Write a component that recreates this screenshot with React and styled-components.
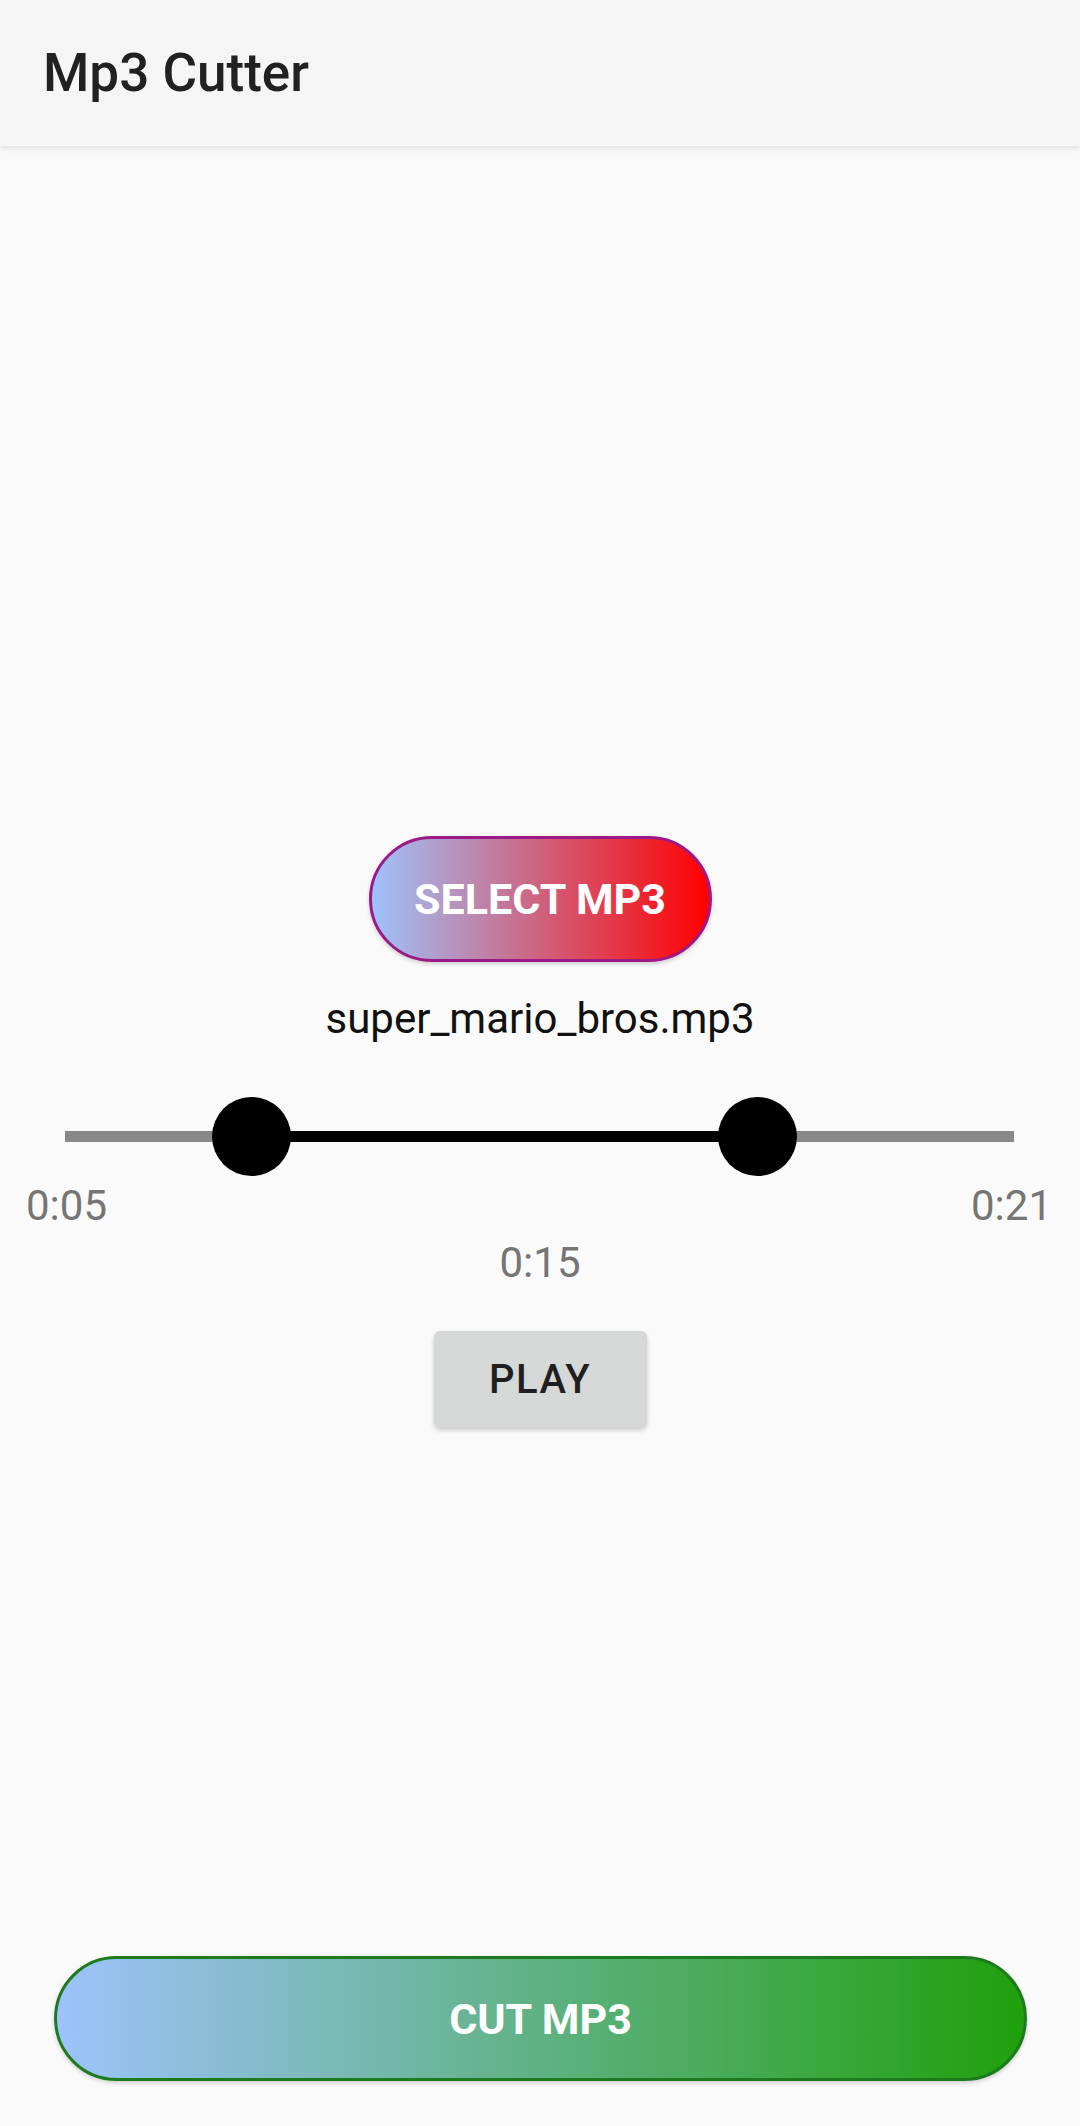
import React from 'react';
import styled, { createGlobalStyle } from 'styled-components';

const GlobalStyle = createGlobalStyle`
  * {
    box-sizing: border-box;
  }

  body {
    margin: 0;
    background: #fafafa;
    font-family: Roboto, 'Noto Sans', sans-serif;
  }
`;

const Page = styled.div`
  display: flex;
  flex-direction: column;
  min-height: 2126px;
  background: #fafafa;
`;

const Header = styled.header`
  display: flex;
  align-items: center;
  height: 146px;
  padding-left: 43px;
  background: #f5f5f5;
  box-shadow: 0 2px 6px rgba(0, 0, 0, 0.12);
  position: relative;
  z-index: 1;
`;

const Title = styled.h1`
  margin: 0;
  font-size: 53px;
  font-weight: 500;
  color: #212121;
`;

const Main = styled.main`
  flex: 1;
  display: flex;
  flex-direction: column;
  align-items: center;
  padding-top: 690px;
`;

const PillButton = styled.button`
  display: flex;
  align-items: center;
  justify-content: center;
  width: ${(p) => p.$width}px;
  height: ${(p) => p.$height}px;
  border-radius: ${(p) => p.$height / 2}px;
  border: 3px solid ${(p) => p.$border};
  background: linear-gradient(to right, #9ec3fb, ${(p) => p.$to});
  color: #ffffff;
  font-family: Roboto, sans-serif;
  font-size: 43px;
  font-weight: 700;
  box-shadow: 0 2px 4px rgba(0, 0, 0, 0.18);
  cursor: pointer;
`;

const FileName = styled.p`
  margin: 32px 0 0;
  font-size: 42px;
  color: #111111;
`;

const Slider = styled.div`
  position: relative;
  align-self: stretch;
  height: 79px;
  margin: 54px 66px 0 65px;
`;

const Track = styled.div`
  position: absolute;
  left: 0;
  right: 0;
  top: 34px;
  height: 11px;
  background: #888888;
`;

const Range = styled.div`
  position: absolute;
  top: 34px;
  height: 11px;
  background: #000000;
`;

const Thumb = styled.div`
  position: absolute;
  top: 0;
  width: 79px;
  height: 79px;
  margin-left: -39.5px;
  border-radius: 50%;
  background: #000000;
`;

const TimeRow = styled.div`
  display: flex;
  justify-content: space-between;
  align-self: stretch;
  margin-top: 5px;
  padding: 0 28px 0 26px;
`;

const Time = styled.span`
  font-size: 42px;
  color: #757575;
`;

const Duration = styled(Time)`
  margin-top: 8px;
`;

const PlayButton = styled.button`
  width: 213px;
  height: 96px;
  margin-top: 44px;
  border: none;
  border-radius: 6px;
  background: #d6d7d7;
  color: #1f1f1f;
  font-family: Roboto, sans-serif;
  font-size: 40px;
  font-weight: 500;
  letter-spacing: 1.5px;
  box-shadow: 0 3px 5px rgba(0, 0, 0, 0.2);
  cursor: pointer;
`;

const Footer = styled.div`
  display: flex;
  justify-content: center;
  padding: 0 53px 45px 54px;
`;

const start = 0.196;
const end = 0.73;

const App = () => {
  return (
    <Page>
      <GlobalStyle />
      <Header>
        <Title>Mp3 Cutter</Title>
      </Header>
      <Main>
        <PillButton $width={343} $height={126} $border="#9c1a87" $to="#ff0000">
          SELECT MP3
        </PillButton>
        <FileName>super_mario_bros.mp3</FileName>
        <Slider>
          <Track />
          <Range style={{ left: `${start * 100}%`, width: `${(end - start) * 100}%` }} />
          <Thumb style={{ left: `${start * 100}%` }} />
          <Thumb style={{ left: `${end * 100}%` }} />
        </Slider>
        <TimeRow>
          <Time>0:05</Time>
          <Time>0:21</Time>
        </TimeRow>
        <Duration>0:15</Duration>
        <PlayButton>PLAY</PlayButton>
      </Main>
      <Footer>
        <PillButton $width={973} $height={125} $border="#1e7a1e" $to="#20a00c">
          CUT MP3
        </PillButton>
      </Footer>
    </Page>
  );
};

export default App;
